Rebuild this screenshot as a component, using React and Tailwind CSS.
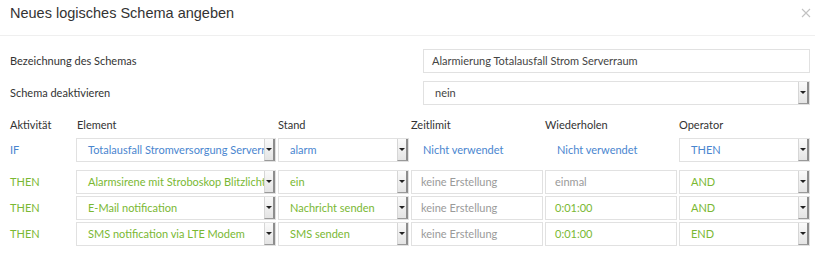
import React from 'react';

const cols = 'grid grid-cols-[64px_200px_131px_132px_132px_131px] gap-x-[2px]';

const BLUE = 'text-[#4a86cf]';
const GREEN = 'text-[#7ab833]';
const GRAY = 'text-[#9a9a9a]';

const Arrow = () => (
  <div className="w-[11px] shrink-0 flex items-center justify-center bg-gradient-to-b from-[#fafafa] to-[#e4e4e4] border-l border-l-[#d6d6d6] border-r-2 border-r-[#8d8d8d] border-b border-b-[#9a9a9a]">
    <div className="w-0 h-0 border-l-[3px] border-r-[3px] border-t-[3px] border-l-transparent border-r-transparent border-t-[#222]" />
  </div>
);

const Select = ({ value, color }) => (
  <div className="h-[24px] flex items-stretch border border-[#e1e1e1] bg-white overflow-hidden">
    <div className={`flex-1 min-w-0 pl-[11px] flex items-center whitespace-nowrap overflow-hidden ${color}`}>
      {value}
    </div>
    <Arrow />
  </div>
);

const Input = ({ value, color }) => (
  <div className={`h-[24px] flex items-center border border-[#e1e1e1] bg-white pl-[9px] whitespace-nowrap overflow-hidden ${color}`}>
    {value}
  </div>
);

const Plain = ({ value, color }) => (
  <div className={`h-[24px] flex items-center pl-[12px] whitespace-nowrap ${color}`}>{value}</div>
);

const rows = [
  { act: 'THEN', el: 'Alarmsirene mit Stroboskop Blitzlicht', stand: 'ein', zeit: 'keine Erstellung', wied: 'einmal', wiedColor: GRAY, op: 'AND' },
  { act: 'THEN', el: 'E-Mail notification', stand: 'Nachricht senden', zeit: 'keine Erstellung', wied: '0:01:00', wiedColor: GREEN, op: 'AND' },
  { act: 'THEN', el: 'SMS notification via LTE Modem', stand: 'SMS senden', zeit: 'keine Erstellung', wied: '0:01:00', wiedColor: GREEN, op: 'END' },
];

export default function App() {
  return (
    <div className="w-[815px] h-[253px] bg-white overflow-hidden font-['Lato',sans-serif] text-[11px] text-[#333]">
      {/* Header */}
      <div className="h-[36px] border-b border-[#efefef] flex items-start justify-between pl-[10px] pr-[4px] pt-[6px]">
        <div className="font-['Liberation_Sans',Arial,sans-serif] text-[14.5px] leading-none text-[#333]">
          Neues logisches Schema angeben
        </div>
        <svg width="10" height="10" viewBox="0 0 10 10" className="mt-[2px]">
          <path d="M1 1 L9 9 M9 1 L1 9" stroke="#c2c2c2" strokeWidth="1.1" />
        </svg>
      </div>

      <div className="pl-[10px] pr-[5px] pt-[13px]">
        {/* Name */}
        <div className="flex items-center h-[24px]">
          <div className="flex-1">Bezeichnung des Schemas</div>
          <div className="w-[387px] h-[24px] flex items-center border border-[#e1e1e1] pl-[8px] text-[#444]">
            Alarmierung Totalausfall Strom Serverraum
          </div>
        </div>

        {/* Deactivate */}
        <div className="flex items-center h-[24px] mt-[8px]">
          <div className="flex-1">Schema deaktivieren</div>
          <div className="w-[387px] h-[24px] flex items-stretch border border-[#e1e1e1] text-[#444]">
            <div className="flex-1 pl-[11px] flex items-center">nein</div>
            <Arrow />
          </div>
        </div>

        {/* Table header */}
        <div className={`${cols} h-[20px] mt-[10px] items-center`}>
          <div>Aktivität</div>
          <div className="pl-[1px]">Element</div>
          <div>Stand</div>
          <div>Zeitlimit</div>
          <div>Wiederholen</div>
          <div>Operator</div>
        </div>

        {/* IF row */}
        <div className={`${cols} mt-[3px]`}>
          <div className={`h-[24px] flex items-center ${BLUE}`}>IF</div>
          <Select value="Totalausfall Stromversorgung Serverraum" color={BLUE} />
          <Select value="alarm" color={BLUE} />
          <Plain value="Nicht verwendet" color={BLUE} />
          <Plain value="Nicht verwendet" color={BLUE} />
          <Select value="THEN" color={BLUE} />
        </div>

        {/* THEN rows */}
        <div className="mt-[8px] flex flex-col gap-[2px]">
          {rows.map((r, i) => (
            <div key={i} className={cols}>
              <div className={`h-[24px] flex items-center ${GREEN}`}>{r.act}</div>
              <Select value={r.el} color={GREEN} />
              <Select value={r.stand} color={GREEN} />
              <Input value={r.zeit} color={GRAY} />
              <Input value={r.wied} color={r.wiedColor} />
              <Select value={r.op} color={GREEN} />
            </div>
          ))}
        </div>
      </div>
    </div>
  );
}
